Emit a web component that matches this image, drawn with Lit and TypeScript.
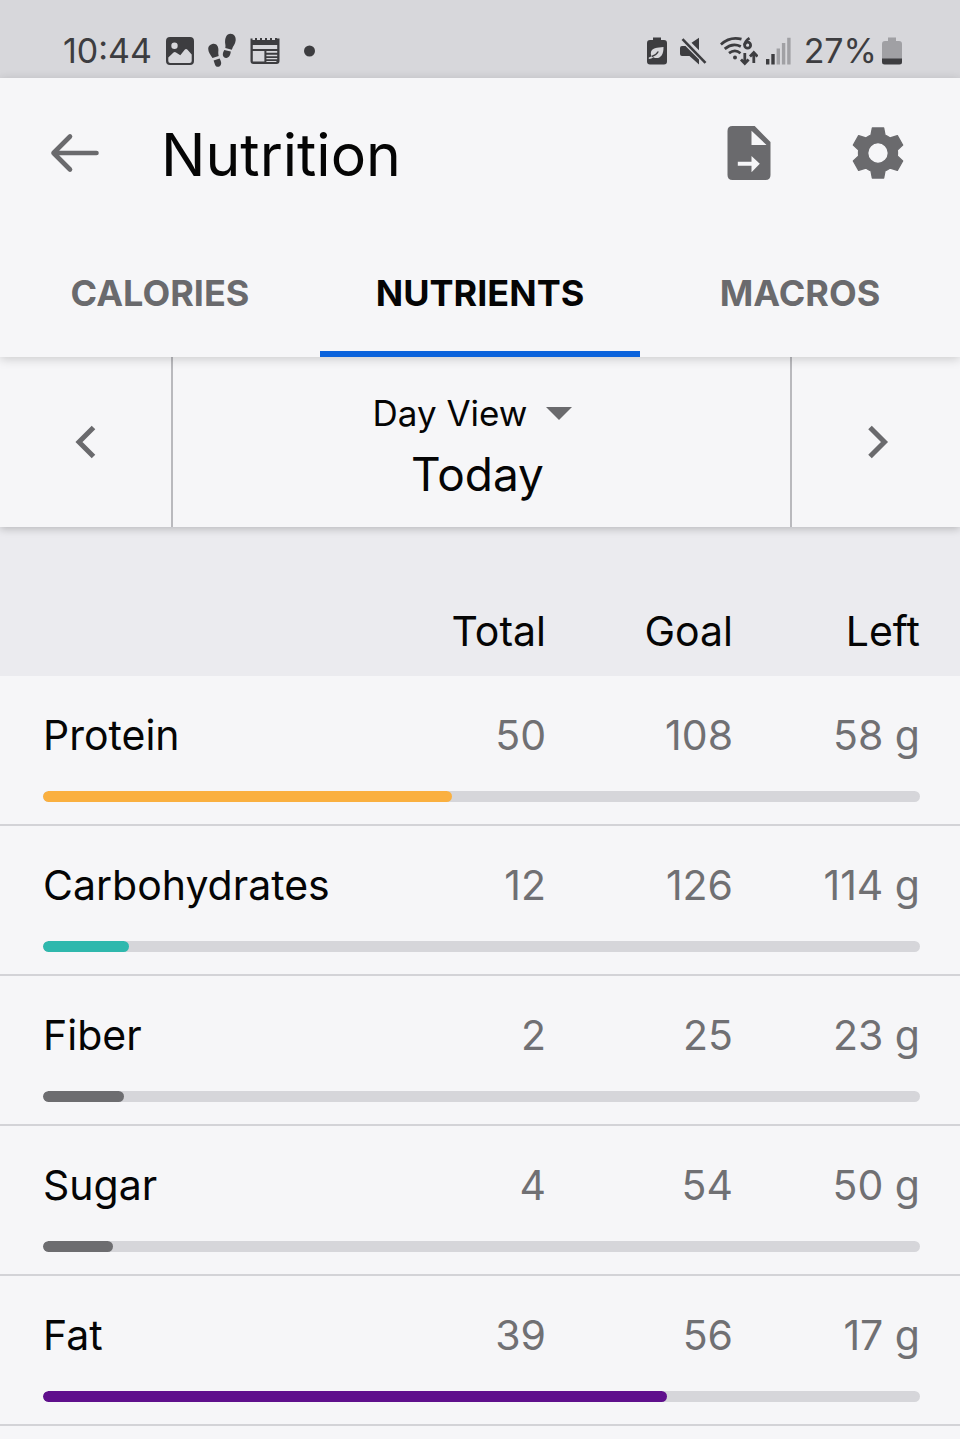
import { LitElement, html, css } from "lit";
import { customElement, property, state } from "lit/decorators.js";
import { classMap } from "lit/directives/class-map.js";
import { styleMap } from "lit/directives/style-map.js";

interface Nutrient {
  name: string;
  total: number;
  goal: number;
  left: number;
  percent: number;
  color: string;
}

const NUTRIENTS: Nutrient[] = [
  { name: "Protein", total: 50, goal: 108, left: 58, percent: 46.6, color: "#fab040" },
  { name: "Carbohydrates", total: 12, goal: 126, left: 114, percent: 9.8, color: "#2fb8ad" },
  { name: "Fiber", total: 2, goal: 25, left: 23, percent: 9.2, color: "#6d6d70" },
  { name: "Sugar", total: 4, goal: 54, left: 50, percent: 8, color: "#6d6d70" },
  { name: "Fat", total: 39, goal: 56, left: 17, percent: 71.1, color: "#5f0f8c" },
];

@customElement("status-bar")
class StatusBar extends LitElement {
  static styles = css`
    :host {
      display: flex;
      justify-content: space-between;
      align-items: center;
      box-sizing: border-box;
      height: 78px;
      padding: 24px 58px 0 63px;
      background: #d7d7db;
      color: #3d3d40;
      font-size: 34px;
      line-height: 40px;
    }
    .side {
      display: flex;
      align-items: center;
    }
    .left {
      gap: 14px;
    }
    .right {
      gap: 13px;
    }
    .dot {
      margin-left: 10px;
    }
    .radio {
      display: flex;
      align-items: center;
      gap: 8px;
    }
    .level {
      display: flex;
      align-items: center;
      gap: 5px;
    }
    svg {
      display: block;
      fill: currentColor;
    }
  `;

  render() {
    return html`
      <div class="side left">
        <span>10:44</span>
        <svg width="28" height="28" viewBox="0 0 28 28" aria-hidden="true">
          <path fill-rule="evenodd" d="M4 0h20a4 4 0 0 1 4 4v20a4 4 0 0 1-4 4H4a4 4 0 0 1-4-4V4a4 4 0 0 1 4-4zM8.5 5.5a3.2 3.2 0 1 0 0 6.4a3.2 3.2 0 0 0 0-6.4zM2.3 20.5V24q0 2 2 2h19.400q2 0 2-2v-6.500l-4.200-4.700q-1.500-1.600-2.800 0l-4.400 5.400-4.300-2.800q-1.400-.8-2.500.2z"/>
        </svg>
        <svg width="28" height="36" viewBox="0 0 28 36" aria-hidden="true">
          <path d="M4.200 11C8 9.600 10.600 13 10.400 17c-.2 2.500-.2 3.800.3 6l-6.200 2C2.500 21.800.2 19.400.2 15.800.2 13.300 1.900 11.600 4.200 11z"/>
          <path d="M5.600 27.600l6-2.200c1.500 2.600 2.200 5 1 6.800-1.500 2.300-4.500 2-5.500-.3z"/>
          <path d="M22.500.7c3.700.2 5.500 3 5.200 6.600-.3 3.700-2.600 5.600-3.900 9.400l-6.500-1.700c.7-3.200-.6-4.400-.2-7.600C17.600 3.300 19.600.5 22.500.7z"/>
          <path d="M16.300 17l6.500 1.600c-.3 3.600-1.900 6.500-4.700 6.300-3.700-.3-4.200-4-1.800-7.900z"/>
        </svg>
        <svg width="30" height="28" viewBox="0 0 30 28" aria-hidden="true">
          <path fill-rule="evenodd" d="M.5 1.500h2V3H5V1h2v2h3V1h2v2h3V1h2v2h3V1h2v2h3V1h2v.5h2.500V24q0 3-3 3h-23q-3 0-3-3zM2.800 8v4h24.400V8zM2.800 14v10.500h11.600V14zM16.400 14v1.800h10.800V14zM16.400 17.800v1.400h10.800v-1.400zM16.400 21v1.300h10.800V21zM16.400 24v1h10v-1z"/>
        </svg>
        <svg class="dot" width="12" height="12" viewBox="0 0 12 12" aria-hidden="true">
          <circle cx="5.500" cy="6" r="5.500"/>
        </svg>
      </div>
      <div class="side right">
        <svg width="20" height="28" viewBox="0 0 20 28" aria-hidden="true">
          <path fill-rule="evenodd" d="M6 .5h8v2.500h3q3 0 3 3V24.500q0 3-3 3H3q-3 0-3-3V6q0-3 3-3h3zM16.500 10c-6 .8-12.500.5-12.700 6.300 0 1.200.3 2.200.8 3-1 .6-2 1-2.800 1.200v1.400c1.700-.1 3.200-.8 4.500-1.700 5 2.500 10.400-.2 10.200-10.200z"/>
          <path d="M4.800 19.500q4-1 6.500-5" fill="none" stroke="currentColor" stroke-width="1.400"/>
        </svg>
        <svg width="27" height="28" viewBox="0 0 27 28" aria-hidden="true">
          <path d="M0 11q0-2 2-2h3.500L19 22.500V27.500L9.500 19H2q-2 0-2-2zM11.500 5.800L19 .8v12.500z"/>
          <path d="M2.500 2.200l23 23.600" fill="none" stroke="currentColor" stroke-width="2.600"/>
        </svg>
        <div class="radio">
          <svg width="38" height="30" viewBox="0 0 38 30" aria-hidden="true">
            <g fill="none" stroke="currentColor" stroke-width="2.800">
              <path d="M.9 8.500Q10 .2 21.500 3.200M4.700 12.800Q12.500 6.300 20.800 10.400M9 17.200q6-4.600 11.500 0"/>
              <path d="M29.500 2.200q-4.600 3-4.800 6.800"/>
              <circle cx="27.600" cy="9.200" r="3"/>
              <path d="M24.800 17v10M21 23.500l3.800 4 3.800-4M33.800 27V17M30 20.500l3.800-4 3.800 4"/>
            </g>
            <circle cx="15" cy="21.500" r="2"/>
          </svg>
          <svg width="25" height="28" viewBox="0 0 25 28" aria-hidden="true">
            <path d="M0 22h3.400v5.500H0zM5.300 17h3.400v10.500H5.300z"/>
            <path d="M10.600 11.500H14v16h-3.400zM15.900 6h3.400v21.500h-3.400zM21.200.8h3.400v26.700h-3.400z" fill="#a0a0a4"/>
          </svg>
        </div>
        <div class="level">
          <span>27%</span>
          <svg width="20" height="28" viewBox="0 0 20 28" aria-hidden="true">
            <path d="M6 .5h8V4h3q3 0 3 3v15H0V7q0-3 3-3h3z" fill="#a0a0a4"/>
            <path d="M0 21.500h20V25q0 2.500-2.500 2.500h-15Q0 27.500 0 25z"/>
          </svg>
        </div>
      </div>
    `;
  }
}

@customElement("app-header")
class AppHeader extends LitElement {
  static styles = css`
    :host {
      display: block;
      position: relative;
      background: #f6f6f8;
      color: #6a6a6d;
      box-shadow: 0 2px 10px rgba(0, 0, 0, 0.18);
    }
    button {
      border: 0;
      padding: 0;
      background: none;
      color: inherit;
      font: inherit;
      cursor: pointer;
    }
    .bar {
      display: flex;
      align-items: center;
      height: 150px;
      padding: 0 56px 0 50px;
    }
    h1 {
      flex: 1;
      margin: 0;
      padding: 4px 0 0 61px;
      color: #050505;
      font-size: 59px;
      font-weight: 400;
      line-height: 72px;
    }
    .actions {
      display: flex;
      align-items: center;
      gap: 81px;
    }
    svg {
      display: block;
      fill: currentColor;
    }
    .tabs {
      display: grid;
      grid-template-columns: repeat(3, 1fr);
    }
    .tab {
      height: 129px;
      padding-top: 6px;
      border-bottom: 6px solid transparent;
      font-size: 36px;
      font-weight: 700;
      line-height: 44px;
    }
    .selected {
      border-bottom-color: #0b63dc;
      color: #050505;
    }
  `;

  @state() private active = "NUTRIENTS";

  render() {
    return html`
      <div class="bar">
        <button type="button" aria-label="Back">
          <svg width="50" height="42" viewBox="0 0 50 42" aria-hidden="true">
            <path d="M46.500 21H3.500M20 4.500L3.500 21 20 37.500" fill="none" stroke="currentColor" stroke-width="4.600" stroke-linecap="round" stroke-linejoin="round"/>
          </svg>
        </button>
        <h1>Nutrition</h1>
        <div class="actions">
          <button type="button" aria-label="Export">
            <svg width="44" height="54" viewBox="0 0 44 54" aria-hidden="true">
              <path fill-rule="evenodd" d="M5 0H27.700L43.500 16V49q0 5-5 5H5.500q-5 0-5-5V5q0-5 5-5zM24.500 4.700V19H39.500zM10.800 35.700V39.800H24.500V46.200L32.800 37.800 24.500 30V35.700z"/>
            </svg>
          </button>
          <button type="button" aria-label="Settings">
            <svg width="52" height="52" viewBox="-78 -78 156 156" aria-hidden="true">
              <path fill-rule="evenodd" stroke="currentColor" stroke-width="4" stroke-linejoin="round" d="M-17-75H17L21-54Q28-51 36.500-45L58-52 74-24 58-9Q59 0 58 9L74 24 58 52 36.500 45Q28 51 21 54L17 75H-17L-21 54Q-28 51-36.500 45L-58 52-74 24-58 9Q-59 0-58-9L-74-24-58-52-36.500-45Q-28-51-21-54zM0-31a31 31 0 1 0 0 62a31 31 0 0 0 0-62z"/>
            </svg>
          </button>
        </div>
      </div>
      <div class="tabs" role="tablist">
        ${["CALORIES", "NUTRIENTS", "MACROS"].map(
          (name) => html`<button
            type="button"
            role="tab"
            class=${classMap({ tab: true, selected: name === this.active })}
            aria-selected=${name === this.active}
            @click=${() => (this.active = name)}
          >${name}</button>`
        )}
      </div>
    `;
  }
}

@customElement("date-picker")
class DatePicker extends LitElement {
  static styles = css`
    :host {
      display: grid;
      grid-template-columns: 173px 1fr 170px;
      height: 170px;
      background: #f6f6f8;
      color: #6a6a6d;
      box-shadow: 0 2px 8px rgba(0, 0, 0, 0.22);
    }
    button {
      display: flex;
      align-items: center;
      justify-content: center;
      border: 0 solid #b9b9bd;
      padding: 0;
      background: none;
      color: inherit;
      cursor: pointer;
    }
    .previous {
      border-right-width: 2px;
    }
    .next {
      border-left-width: 2px;
    }
    svg {
      display: block;
    }
    .center {
      display: flex;
      flex-direction: column;
      align-items: center;
      padding-top: 34px;
      color: #050505;
    }
    .view {
      display: flex;
      align-items: center;
      gap: 19px;
      padding-right: 18px;
      color: #6a6a6d;
    }
    select {
      appearance: none;
      field-sizing: content;
      border: 0;
      padding: 0;
      background: none;
      color: #050505;
      font-family: inherit;
      font-size: 35px;
      line-height: 44px;
    }
    .date {
      padding-right: 8px;
      margin-top: 10px;
      font-size: 46px;
      line-height: 58px;
    }
  `;

  render() {
    return html`
      <button type="button" class="previous" aria-label="Previous day">
        <svg width="22" height="34" viewBox="0 0 22 34" aria-hidden="true">
          <path d="M18.500 2.500L4 17l14.500 14.500" fill="none" stroke="currentColor" stroke-width="5"/>
        </svg>
      </button>
      <div class="center">
        <div class="view">
          <select aria-label="View">
            <option>Day View</option>
            <option>Week View</option>
          </select>
          <svg width="26" height="13" viewBox="0 0 26 13" aria-hidden="true">
            <path d="M0 0h26L13 13z" fill="currentColor"/>
          </svg>
        </div>
        <div class="date">Today</div>
      </div>
      <button type="button" class="next" aria-label="Next day">
        <svg width="26" height="34" viewBox="0 0 26 34" aria-hidden="true">
          <path d="M7 2.500L21.500 17 7 31.500" fill="none" stroke="currentColor" stroke-width="5"/>
        </svg>
      </button>
    `;
  }
}

@customElement("nutrient-table")
class NutrientTable extends LitElement {
  static styles = css`
    :host {
      display: block;
    }
    table {
      width: 100%;
      border-collapse: collapse;
      table-layout: fixed;
      font-size: 41px;
      line-height: 52px;
    }
    th,
    td {
      padding: 0;
      font-weight: 400;
      text-align: right;
      vertical-align: top;
    }
    .number {
      width: 187px;
    }
    thead th {
      padding-top: 78px;
      height: 71px;
      color: #050505;
    }
    tbody {
      background: #f6f6f8;
    }
    tbody th {
      padding: 33px 0 0 43px;
      text-align: left;
      color: #050505;
    }
    tbody td {
      padding-top: 33px;
      color: #707073;
    }
    thead th:last-child,
    tbody .amount:last-child {
      padding-right: 40px;
    }
    tbody .progress {
      padding: 30px 40px 22px 43px;
      border-bottom: 2px solid #d3d3d7;
    }
    .track {
      height: 11px;
      border-radius: 6px;
      background: #d6d6da;
      overflow: hidden;
    }
    .fill {
      height: 100%;
      border-radius: 6px;
    }
  `;

  @property({ attribute: false }) items: Nutrient[] = [];

  render() {
    return html`
      <table>
        <thead>
          <tr>
            <th aria-label="Nutrient"></th>
            <th class="number" scope="col">Total</th>
            <th class="number" scope="col">Goal</th>
            <th class="number" scope="col">Left</th>
          </tr>
        </thead>
        ${this.items.map(
          (n) => html`
            <tbody>
              <tr>
                <th scope="row">${n.name}</th>
                <td class="amount">${n.total}</td>
                <td class="amount">${n.goal}</td>
                <td class="amount">${n.left} g</td>
              </tr>
              <tr>
                <td class="progress" colspan="4">
                  <div class="track" role="progressbar" aria-label=${n.name} aria-valuenow=${n.total} aria-valuemax=${n.goal}>
                    <div class="fill" style=${styleMap({ width: `${n.percent}%`, background: n.color })}></div>
                  </div>
                </td>
              </tr>
            </tbody>
          `
        )}
      </table>
    `;
  }
}

@customElement("app-root")
class AppRoot extends LitElement {
  static styles = css`
    :host {
      display: block;
      min-height: 100vh;
      background: linear-gradient(#ebebef 0 700px, #f6f6f8 700px);
      font-family: Inter, Roboto, sans-serif;
    }
  `;

  render() {
    return html`
      <status-bar></status-bar>
      <app-header></app-header>
      <date-picker></date-picker>
      <nutrient-table .items=${NUTRIENTS}></nutrient-table>
    `;
  }
}
